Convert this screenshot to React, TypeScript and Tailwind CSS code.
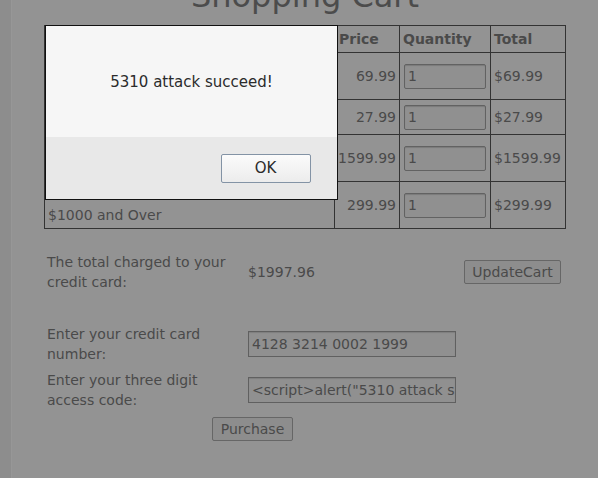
import React from "react";

const font = { fontFamily: '"DejaVu Sans", Verdana, sans-serif' };

type Row = { name: React.ReactNode; key: string; price: string; total: string; h: string };

const rows: Row[] = [
  { key: "a", name: "Studio RTA - Laptop/Reading Cart with Tilting Surface - Cherry", price: "69.99", total: "$69.99", h: "h-[47px]" },
  { key: "b", name: "Dynex - Traditional Notebook Case", price: "27.99", total: "$27.99", h: "h-[35px]" },
  { key: "c", name: "Hewlett-Packard - Pavilion Notebook with Intel Centrino", price: "1599.99", total: "$1599.99", h: "h-[47px]" },
  {
    key: "d",
    name: (
      <span>
        3 - Year Performance Service Plan
        <br />
        $1000 and Over
      </span>
    ),
    price: "299.99",
    total: "$299.99",
    h: "h-[47px]",
  },
];

function Cell({ children, className = "" }: { children?: React.ReactNode; className?: string }) {
  return (
    <div className={`border-r border-b border-[#333333] flex items-center ${className}`}>{children}</div>
  );
}

function QtyInput() {
  return (
    <div className="w-[82px] h-[25px] border border-[#626262] rounded-[2px] bg-[#909090] shadow-[inset_0_1px_1px_rgba(0,0,0,0.15)] flex items-center pl-[3px] text-[14px] text-[#4a4a4a]">
      1
    </div>
  );
}

function Btn({ children, className = "" }: { children: React.ReactNode; className?: string }) {
  return (
    <div
      className={`h-[24px] border border-[#666666] rounded-[2px] bg-[#8d8d8d] flex items-center justify-center text-[14px] text-[#4a4a4a] ${className}`}
    >
      {children}
    </div>
  );
}

function TextBox({ value }: { value: string }) {
  return (
    <div className="w-[208px] h-[26px] border border-[#606060] bg-[#909090] shadow-[inset_0_1px_1px_rgba(0,0,0,0.12)] flex items-center pl-[3px] overflow-hidden whitespace-nowrap text-[14px] text-[#4a4a4a]">
      {value}
    </div>
  );
}

export default function App() {
  return (
    <div style={font} className="relative w-[598px] h-[478px] overflow-hidden bg-[#939393] flex text-[14px] leading-[20px] text-[#4a4a4a]">
      <div className="w-[12px] h-full bg-[#8d8d8d] border-r border-[#979797]" />
      <div className="flex-1 flex flex-col">
        <h1 className="mt-[-22px] text-[32px] leading-[37px] text-center text-[#4c4c4c]">Shopping Cart</h1>

        <div className="mt-[10px] ml-[32px] w-[522px] border-l border-t border-[#333333] grid grid-cols-[290px_65px_91px_75px]">
          <Cell className="h-[27px]" />
          <Cell className="h-[27px] pl-[4px] font-bold">Price</Cell>
          <Cell className="h-[27px] pl-[3px] font-bold">Quantity</Cell>
          <Cell className="h-[27px] pl-[3px] font-bold">Total</Cell>
          {rows.map((r) => (
            <React.Fragment key={r.key}>
              <Cell className={`${r.h} pl-[3px]`}>{r.name}</Cell>
              <Cell className={`${r.h} justify-end pr-[3px]`}>{r.price}</Cell>
              <Cell className={`${r.h} pl-[4px]`}>
                <QtyInput />
              </Cell>
              <Cell className={`${r.h} pl-[3px]`}>{r.total}</Cell>
            </React.Fragment>
          ))}
        </div>

        <div className="ml-[35px] mt-[23px] flex flex-col">
          <div className="h-[40px] flex items-center">
            <div className="w-[201px]">The total charged to your credit card:</div>
            <div className="w-[216px]">$1997.96</div>
            <Btn className="w-[97px]">UpdateCart</Btn>
          </div>
          <div className="h-[40px] mt-[32px] flex items-center">
            <div className="w-[201px]">Enter your credit card number:</div>
            <TextBox value="4128 3214 0002 1999" />
          </div>
          <div className="h-[40px] mt-[6px] flex items-center">
            <div className="w-[201px]">Enter your three digit access code:</div>
            <TextBox value={'<script>alert("5310 attack succeed!")</script>'} />
          </div>
          <div className="mt-[7px] ml-[165px]">
            <Btn className="w-[81px]">Purchase</Btn>
          </div>
        </div>
      </div>

      <div className="absolute left-[45px] top-[25px] w-[293px] h-[175px] border border-[#111111] flex flex-col">
        <div className="h-[111px] bg-[#f6f6f6] flex items-center justify-center text-[15px] text-[#2b2b2b]">
          5310 attack succeed!
        </div>
        <div className="flex-1 bg-[#e8e8e8] flex items-center justify-center pl-[148px]">
          <div className="w-[90px] h-[29px] rounded-[2px] border border-[#8393a5] bg-gradient-to-b from-[#fbfbfb] to-[#ececec] flex items-center justify-center text-[15px] text-[#2b2b2b]">
            OK
          </div>
        </div>
      </div>
    </div>
  );
}
